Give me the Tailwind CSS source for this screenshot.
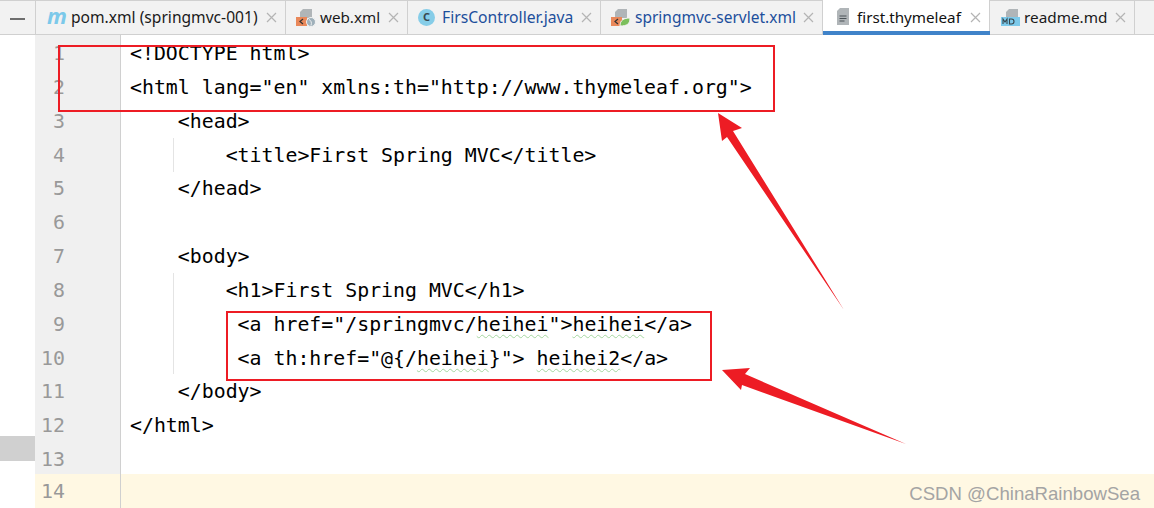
<!DOCTYPE html>
<html lang="en">
<head>
    <meta charset="UTF-8">
    <title>first.thymeleaf</title>
    <script src="https://cdn.jsdelivr.net/npm/@tailwindcss/browser@4"></script>
</head>
<body class="bg-white overflow-hidden">
<div class="relative w-[1154px] h-[508px] overflow-hidden">
    <!-- Tab bar -->
    <div class="flex h-[35px] bg-[#f2f2f2] border-y border-[#d0d0d0] font-['Noto_Sans',sans-serif] text-[#1a1a1a]">
        <div class="w-[35px] flex items-center justify-center shrink-0"><span class="w-[15px] h-[2px] mt-[2px] bg-[#6e6e6e]"></span></div>
        <div class="w-[251px] flex items-center pl-[11px] pr-[8px] border-x border-[#d0d0d0] text-[15.6px]">
            <span class="w-[24px] text-[#7cc9ea] font-['Open_Sans',sans-serif] font-bold italic text-[22px] leading-none -mt-[5px]">m</span>
            <span>pom.xml (springmvc-001)</span>
            <span class="ml-auto text-[#b4b4b4]"><svg width="11" height="11" viewBox="0 0 11 11"><path d="M1 1l9 9M10 1l-9 9" stroke="currentColor" stroke-width="1.2"/></svg></span>
        </div>
        <div class="w-[122px] flex items-center pl-[10px] pr-[8px] border-r border-[#d0d0d0] text-[15.2px]">
            <svg class="w-[20px] h-[20px] mr-[4px]" viewBox="0 0 20 20"><path d="M7 1h9v9H4V4z" fill="#b0b5b8"/><rect x="0" y="9" width="11" height="9" fill="#e9885a"/><path d="M7 11l-3 2.500L7 16" fill="none" stroke="#333" stroke-width="1.2"/><circle cx="15" cy="14" r="4.500" fill="#9fb0ba" stroke="#f2f2f2"/><path d="M13 11.500c2 1 3 3 2 6" fill="none" stroke="#f2f2f2"/></svg>
            <span>web.xml</span>
            <span class="ml-auto text-[#b4b4b4]"><svg width="11" height="11" viewBox="0 0 11 11"><path d="M1 1l9 9M10 1l-9 9" stroke="currentColor" stroke-width="1.2"/></svg></span>
        </div>
        <div class="w-[193px] flex items-center pl-[10px] pr-[8px] border-r border-[#d0d0d0] text-[#1d4f9c] text-[15.7px]">
            <span class="w-[17px] h-[17px] mr-[7px] rounded-full bg-[#86cde8] flex items-center justify-center text-[11px] font-bold text-[#37474f]">C</span>
            <span>FirsController.java</span>
            <span class="ml-auto text-[#b4b4b4]"><svg width="11" height="11" viewBox="0 0 11 11"><path d="M1 1l9 9M10 1l-9 9" stroke="currentColor" stroke-width="1.2"/></svg></span>
        </div>
        <div class="w-[222px] flex items-center pl-[10px] pr-[8px] border-r border-[#d0d0d0] text-[#1d4f9c] text-[15.5px]">
            <svg class="w-[20px] h-[20px] mr-[4px]" viewBox="0 0 20 20"><path d="M7 1h9v9H4V4z" fill="#b0b5b8"/><rect x="0" y="9" width="11" height="9" fill="#e9885a"/><path d="M7 11l-3 2.500L7 16" fill="none" stroke="#333" stroke-width="1.2"/><path d="M9 18c0-6 4-8 10-8 0 6-3 8-10 8z" fill="#7cbf5c" stroke="#f2f2f2"/></svg>
            <span>springmvc-servlet.xml</span>
            <span class="ml-auto text-[#b4b4b4]"><svg width="11" height="11" viewBox="0 0 11 11"><path d="M1 1l9 9M10 1l-9 9" stroke="currentColor" stroke-width="1.2"/></svg></span>
        </div>
        <div class="relative w-[167px] flex items-center pl-[12px] pr-[8px] bg-white border-r border-[#d0d0d0] -mt-px text-[15.2px]">
            <svg class="w-[16px] h-[20px] mr-[6px]" viewBox="0 0 16 20"><path d="M5 1h9v17H2V4z" fill="#b0b5b8"/><path d="M4.500 9h7M4.500 11.500h7M4.500 14h5" stroke="#4a5257" stroke-width="1.200"/></svg>
            <span class="text-[#111]">first.thymeleaf</span>
            <span class="ml-auto text-[#b4b4b4]"><svg width="11" height="11" viewBox="0 0 11 11"><path d="M1 1l9 9M10 1l-9 9" stroke="currentColor" stroke-width="1.2"/></svg></span>
            <span class="absolute left-0 -right-px bottom-[-1px] h-[4px] bg-[#4083c9]"></span>
        </div>
        <div class="w-[145px] flex items-center pl-[11px] pr-[8px] border-r border-[#d0d0d0] text-[15.3px]">
            <svg class="w-[20px] h-[20px] mr-[3px]" viewBox="0 0 20 20"><path d="M8 1h9v9H5V4z" fill="#b0b5b8"/><rect x="0" y="9" width="19" height="9" fill="#7cc9ea"/><path d="M2 16v-5l2 3 2-3v5M8.500 11v5h2a2.500 2.500 0 0 0 0-5z" fill="none" stroke="#37474f" stroke-width="1.100"/></svg>
            <span>readme.md</span>
            <span class="ml-auto text-[#b4b4b4]"><svg width="11" height="11" viewBox="0 0 11 11"><path d="M1 1l9 9M10 1l-9 9" stroke="currentColor" stroke-width="1.2"/></svg></span>
        </div>
    </div>

    <!-- Editor -->
    <div class="flex h-[473px] font-['DejaVu_Sans_Mono',monospace] text-[19.87px] leading-[33.85px]">
        <div class="w-[35px] shrink-0 relative"><div class="absolute left-0 top-[401px] w-[35px] h-[25px] bg-[#d0d0d0]"></div></div>
        <div class="w-[86px] shrink-0 bg-[#f0f0f0] border-r border-[#d0d0d0] text-right pr-[55px] pt-[2px] text-[#999999] relative">
            <div>1</div><div>2</div><div>3</div><div>4</div><div>5</div><div>6</div><div>7</div><div>8</div><div>9</div><div>10</div><div>11</div><div>12</div><div>13</div>
            <div class="absolute left-0 right-0 top-[439px] h-[34px] pt-[1px] bg-[#fff8e3] pr-[55px]">14</div>
        </div>
        <div class="flex-1 relative pl-[9px] pt-[2px] text-black">
            <div class="whitespace-pre">&lt;!DOCTYPE html&gt;</div>
            <div class="whitespace-pre">&lt;html lang="en" xmlns:th="http://www.thymeleaf.org"&gt;</div>
            <div class="whitespace-pre">    &lt;head&gt;</div>
            <div class="whitespace-pre">        &lt;title&gt;First Spring MVC&lt;/title&gt;</div>
            <div class="whitespace-pre">    &lt;/head&gt;</div>
            <div class="whitespace-pre"> </div>
            <div class="whitespace-pre">    &lt;body&gt;</div>
            <div class="whitespace-pre">        &lt;h1&gt;First Spring MVC&lt;/h1&gt;</div>
            <div class="whitespace-pre">         &lt;a href="/springmvc/<span class="underline decoration-wavy decoration-[#a5d6a0] decoration-1 underline-offset-3">heihei</span>"&gt;<span class="underline decoration-wavy decoration-[#a5d6a0] decoration-1 underline-offset-3">heihei</span>&lt;/a&gt;</div>
            <div class="whitespace-pre">         &lt;a th:href="@{/<span class="underline decoration-wavy decoration-[#a5d6a0] decoration-1 underline-offset-3">heihei</span>}"&gt; <span class="underline decoration-wavy decoration-[#a5d6a0] decoration-1 underline-offset-3">heihei2</span>&lt;/a&gt;</div>
            <div class="whitespace-pre">    &lt;/body&gt;</div>
            <div class="whitespace-pre">&lt;/html&gt;</div>
            <div class="absolute left-0 right-0 top-[439px] h-[34px] bg-[#fff8e3]"></div>
            <div class="absolute left-[52px] top-[103px] w-px h-[34px] bg-[#e4e4e4]"></div>
            <div class="absolute left-[52px] top-[238px] w-px h-[101px] bg-[#e4e4e4]"></div>
        </div>
    </div>

    <!-- Annotations drawn over the screenshot -->
    <div class="absolute left-[58px] top-[45px] w-[717px] h-[67px] border-2 border-[#ed1c24]"></div>
    <div class="absolute left-[226px] top-[311px] w-[486px] h-[70px] border-2 border-[#ed1c24]"></div>
    <svg class="absolute left-0 top-0" width="1154" height="508" viewBox="0 0 1154 508">
        <polygon points="718,113 742,128 733,131 844,310 727,137 722,141" fill="#ed1c24"/>
        <polygon points="722,370 750,368 745,374 906,444 742,385 741,390" fill="#ed1c24"/>
    </svg>
    <span class="absolute right-[14px] top-[480px] font-['Liberation_Sans',sans-serif] text-[18.600px] text-[#a4a4a4]">CSDN @ChinaRainbowSea</span>
</div>
</body>
</html>
